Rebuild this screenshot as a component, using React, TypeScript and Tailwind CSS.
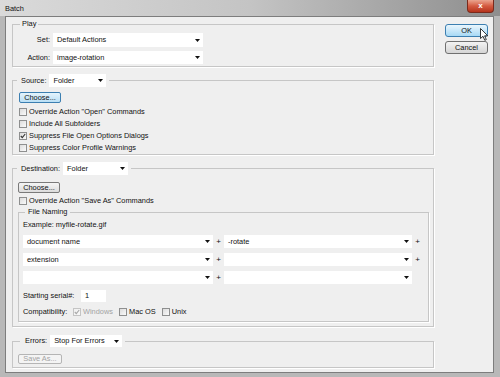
import type { ReactNode } from "react";
import clsx from "clsx";

function Arrow() {
  return (
    <svg width="5" height="3" viewBox="0 0 5 3" className="shrink-0">
      <path d="M0 0H5L2.5 3Z" fill="#111" />
    </svg>
  );
}

function Select({ value = "", className }: { value?: string; className: string }) {
  return (
    <div className={clsx("flex items-center justify-between bg-white pl-[4px] pr-[3px]", className)}>
      <span>{value}</span>
      <Arrow />
    </div>
  );
}

function Check({ checked = false, disabled = false }: { checked?: boolean; disabled?: boolean }) {
  return (
    <span
      className={clsx(
        "w-[8px] h-[8px] shrink-0 border flex items-center justify-center bg-linear-to-br",
        disabled ? "border-[#c4c4c4] from-[#f0f0f0] to-[#f8f8f8]" : "border-[#8e8f8f] from-[#dcdcdc] to-[#fafafa]"
      )}
    >
      {checked && (
        <svg width="6" height="6" viewBox="0 0 6 6">
          <path d="M0.8 3L2.3 4.6L5.2 1" fill="none" stroke={disabled ? "#a8a8a8" : "#333"} strokeWidth="1.1" />
        </svg>
      )}
    </span>
  );
}

function Btn({ children, className, focus = false, disabled = false }: { children: ReactNode; className: string; focus?: boolean; disabled?: boolean }) {
  return (
    <button
      disabled={disabled}
      className={clsx(
        "flex items-center justify-center border rounded-[2px] bg-linear-to-b",
        focus && "border-[#3c7fb1] from-[#e5f4fc] to-[#b9dff5]",
        disabled && "border-[#b5b5b5] from-[#f4f4f4] to-[#f4f4f4] text-[#a3a3a3]",
        !focus && !disabled && "border-[#7a7a7a] from-[#f5f5f5] to-[#dcdcdc]",
        className
      )}
    >
      {children}
    </button>
  );
}

const group = "border border-[#c6c6c6] shadow-[1px_1px_0_#fff]";

export default function App() {
  const sourceChecks = [
    { label: 'Override Action "Open" Commands', checked: false },
    { label: "Include All Subfolders", checked: false },
    { label: "Suppress File Open Options Dialogs", checked: true },
    { label: "Suppress Color Profile Warnings", checked: false },
  ];

  return (
    <div className="relative w-[500px] h-[377px] flex flex-col bg-[#b8b8b8] font-['Liberation_Sans',Arial,sans-serif] text-[7.4px] leading-none text-[#111] overflow-hidden">
      {/* title bar */}
      <div className="h-[16px] shrink-0 flex items-start bg-linear-to-r from-[#dadada] via-[#c4c4c4] to-[#8e8e8e]">
        <span className="ml-[5px] mt-[5px]">Batch</span>
        <div className="ml-auto mr-[6px] w-[27px] h-[13px] flex items-center justify-center rounded-b-[4px] border border-t-0 border-[#7a2a1c] bg-linear-to-b from-[#e9a48f] via-[#d45a40] to-[#b5331c] text-white font-bold text-[8px]">
          x
        </div>
      </div>

      <div className="flex-1 flex pl-[5px] pr-[6px]">
        <div className="flex-1 flex border border-[#7d7d7d] bg-[#efefef]">
          {/* main column */}
          <div className="ml-[6px] w-[422px] flex flex-col">
            <fieldset className={clsx(group, "mt-[2px] pb-[2px]")}>
              <legend className="ml-[7px] px-[2px] h-[10px] leading-[10px]">Play</legend>
              <div className="pt-[4px] flex flex-col gap-[4px]">
                <div className="flex items-center h-[14px]">
                  <span className="w-[37px] text-right">Set:</span>
                  <Select className="ml-[3px] w-[150px] h-[14px]" value="Default Actions" />
                </div>
                <div className="flex items-center h-[13px]">
                  <span className="w-[37px] text-right">Action:</span>
                  <Select className="ml-[3px] w-[150px] h-[13px]" value="image-rotation" />
                </div>
              </div>
            </fieldset>

            <fieldset className={clsx(group, "mt-[7px]")}>
              <legend className="ml-[4px] pl-[4px] pr-[3px]">
                <div className="flex items-center h-[13px]">
                  <span>Source:</span>
                  <Select className="ml-[3px] w-[57px] h-[13px]" value="Folder" />
                </div>
              </legend>
              <div className="pl-[6px] pt-[5px]">
                <Btn className="w-[42px] h-[11px]" focus>Choose...</Btn>
                <div className="mt-[3px] flex flex-col">
                  {sourceChecks.map((c) => (
                    <div key={c.label} className="h-[12px] flex items-center gap-[2px]">
                      <Check checked={c.checked} />
                      <span>{c.label}</span>
                    </div>
                  ))}
                </div>
              </div>
            </fieldset>

            <fieldset className={clsx(group, "mt-[7px] pb-[4px]")}>
              <legend className="ml-[4px] pl-[4px] pr-[3px]">
                <div className="flex items-center h-[13px]">
                  <span>Destination:</span>
                  <Select className="ml-[3px] w-[65px] h-[13px]" value="Folder" />
                </div>
              </legend>
              <div className="pl-[5px] pt-[7px]">
                <Btn className="w-[42px] h-[11px]">Choose...</Btn>
                <div className="mt-[2px] h-[12px] flex items-center gap-[2px] pl-[1px]">
                  <Check />
                  <span>Override Action "Save As" Commands</span>
                </div>
                <fieldset className={clsx(group, "w-[411px] pb-[3px]")}>
                  <legend className="ml-[6px] px-[3px] h-[10px] leading-[10px]">File Naming</legend>
                  <div className="pl-[4px] pt-[3px]">
                    <div className="h-[10px] flex items-center">Example: myfile-rotate.gif</div>
                    {[
                      ["document name", "-rotate", true],
                      ["extension", "", true],
                      ["", "", false],
                    ].map(([a, b, plus], i) => (
                      <div key={i} className="mt-[5px] h-[13px] flex items-center">
                        <Select className="w-[190px] h-[13px]" value={a as string} />
                        <span className="w-[11px] text-center text-[8px]">+</span>
                        <Select className="w-[188px] h-[13px]" value={b as string} />
                        {plus && <span className="w-[11px] text-center text-[8px]">+</span>}
                      </div>
                    ))}
                    <div className="mt-[6px] h-[12px] flex items-center">
                      <span className="w-[58px]">Starting serial#:</span>
                      <div className="w-[25px] h-[12px] bg-white flex items-center pl-[4px]">1</div>
                    </div>
                    <div className="mt-[4px] h-[12px] flex items-center">
                      <span className="w-[50px]">Compatibility:</span>
                      <Check checked disabled />
                      <span className="ml-[2px] text-[#a3a3a3]">Windows</span>
                      <span className="ml-[6px]"><Check /></span>
                      <span className="ml-[2px]">Mac OS</span>
                      <span className="ml-[6px]"><Check /></span>
                      <span className="ml-[2px]">Unix</span>
                    </div>
                  </div>
                </fieldset>
              </div>
            </fieldset>

            <fieldset className={clsx(group, "mt-[8px] pb-[3px]")}>
              <legend className="ml-[7px] pl-[5px] pr-[3px]">
                <div className="flex items-center h-[12px]">
                  <span>Errors:</span>
                  <Select className="ml-[3px] w-[72px] h-[12px]" value="Stop For Errors" />
                </div>
              </legend>
              <div className="pl-[5px] pt-[7px]">
                <Btn className="w-[44px] h-[10px]" disabled>Save As...</Btn>
              </div>
            </fieldset>
          </div>

          {/* buttons column */}
          <div className="ml-[11px] mt-[7px] w-[43px] flex flex-col gap-[4px]">
            <button className="h-[13px] flex items-center justify-center rounded-[3px] border border-[#3c7fb1] bg-linear-to-b from-[#eaf6fd] to-[#a7d9f5]">OK</button>
            <button className="h-[13px] flex items-center justify-center rounded-[3px] border border-[#707070] bg-linear-to-b from-[#f3f3f3] to-[#d5d5d5]">Cancel</button>
          </div>
        </div>
      </div>
      <div className="h-[4px] shrink-0" />

      {/* mouse pointer over OK */}
      <svg className="absolute left-[480px] top-[28px]" width="9" height="13" viewBox="0 0 9 13">
        <path d="M0.5 0.5V10.5L3 8.3L4.8 12.3L6.3 11.6L4.6 7.8H7.8Z" fill="#fff" stroke="#222" strokeWidth="0.9" strokeLinejoin="round" />
      </svg>
    </div>
  );
}
